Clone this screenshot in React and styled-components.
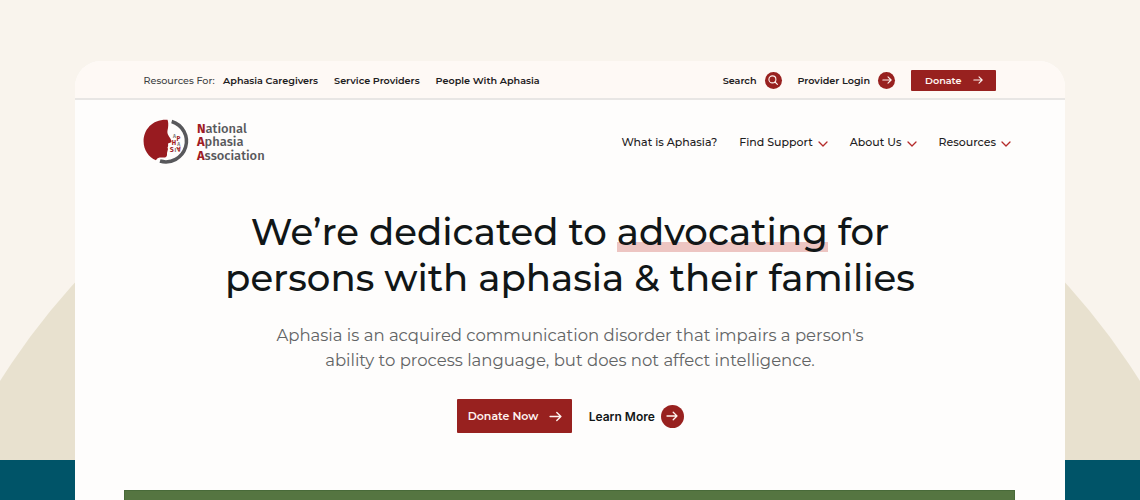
import styled, { createGlobalStyle } from "styled-components";

const red = "#98211f";
const ink = "#1d2021";

const GlobalStyle = createGlobalStyle`
  * { box-sizing: border-box; }
  body {
    margin: 0;
    font-family: Montserrat, Inter, "Liberation Sans", sans-serif;
    color: ${ink};
  }
`;

const Page = styled.div`
  position: relative;
  height: 500px;
  overflow: hidden;
  padding: 61px 75px 0;
  background: #f9f4ed;
`;

const Backdrop = styled.svg`
  position: absolute;
  left: 0;
  top: 0;
`;

const Card = styled.main`
  position: relative;
  height: 439px;
  overflow: hidden;
  display: flex;
  flex-direction: column;
  border-radius: 26px 26px 0 0;
  background: #fefdfc;
`;

const TopBar = styled.div`
  flex: none;
  height: 39px;
  display: flex;
  align-items: center;
  justify-content: space-between;
  padding: 1px 69px 0 68.5px;
  background: #fef9f5;
  border-bottom: 2px solid #e8e6e4;
`;

const TopLinks = styled.div`
  display: flex;
  align-items: center;
  gap: 16px;
`;

const TopLabel = styled.span`
  font-size: 9.65px;
  font-weight: 500;
  color: #3c3e3f;
  margin-right: -7.5px;
`;

const TopLink = styled.a`
  display: flex;
  align-items: center;
  gap: 8px;
  font-size: 9.65px;
  font-weight: 600;
  white-space: nowrap;
`;

const Round = styled.span`
  width: ${(p) => p.$size}px;
  height: ${(p) => p.$size}px;
  border-radius: 50%;
  background: ${red};
  display: flex;
  align-items: center;
  justify-content: center;
`;

const DonateButton = styled.a`
  width: 85px;
  height: 21px;
  display: flex;
  align-items: center;
  justify-content: space-between;
  padding: 0 13px 0 14px;
  border-radius: 1px;
  background: ${red};
  color: #fff4f0;
  font-size: 9.65px;
  font-weight: 600;
`;

const Header = styled.header`
  flex: none;
  height: 84px;
  display: flex;
  align-items: center;
  justify-content: space-between;
  padding: 0 54px 0 68px;
`;

const Brand = styled.a`
  display: flex;
  align-items: center;
  gap: 9px;
`;

const BrandName = styled.span`
  display: flex;
  flex-direction: column;
  font: 500 12.9px/13.5px "Fira Sans", "Open Sans", sans-serif;
  color: #58585b;

  b {
    font-weight: 700;
    color: #a01c24;
  }
`;

const LogoMark = styled.svg`
  overflow: visible;
  margin-bottom: 1px;
`;

const Nav = styled.nav`
  display: flex;
  align-items: center;
  gap: 22px;
`;

const NavItem = styled.a`
  display: flex;
  align-items: center;
  gap: 5px;
  font-size: 11px;
  font-weight: 500;
  white-space: nowrap;

  svg {
    margin-top: 3px;
  }
`;

const Hero = styled.section`
  display: flex;
  flex-direction: column;
  align-items: center;
  text-align: center;
  padding-top: 25px;
`;

const Title = styled.h1`
  margin: 0;
  font-size: 37.1px;
  font-weight: 500;
  line-height: 45.5px;
  color: #111617;
  white-space: nowrap;
`;

const Highlight = styled.span`
  background: linear-gradient(#edc5c2, #edc5c2) 0 33px / 100% 10px no-repeat;
`;

const Lead = styled.p`
  margin: 23px 0 0;
  font-size: 16.5px;
  line-height: 25px;
  color: #626465;
  white-space: nowrap;
`;

const Actions = styled.div`
  display: flex;
  align-items: center;
  gap: 17px;
  margin: 26.4px 0 0 0.5px;
`;

const PrimaryButton = styled.a`
  width: 115px;
  height: 34px;
  display: flex;
  align-items: center;
  justify-content: space-between;
  padding: 0 10px 0 11px;
  border-radius: 1px;
  background: ${red};
  color: #fff4f0;
  font-size: 11px;
  font-weight: 600;
`;

const TextButton = styled.a`
  display: flex;
  align-items: center;
  gap: 6px;
  font: 600 12px Inter, sans-serif;
  color: #111617;
`;

const GreenPanel = styled.div`
  flex: none;
  height: 10px;
  margin: auto 50px 0 49px;
  border: 1px solid #486a39;
  border-bottom: 0;
  background: #557541;
`;

function Arrow({ size = 12 }) {
  return (
    <svg width={size} height={size} viewBox="0 0 12 12" fill="none" stroke="#fff4f0" strokeWidth="1.3" strokeLinecap="round" strokeLinejoin="round">
      <path d="M1 6h10M7.200 2.200 11 6 7.200 9.800" />
    </svg>
  );
}

function Magnifier() {
  return (
    <svg width="10" height="10" viewBox="0 0 10 10" fill="none" stroke="#fff4f0" strokeWidth="1.1" strokeLinecap="round">
      <circle cx="4.4" cy="4.4" r="3.5" />
      <path d="m7 7 2.400 2.400" />
    </svg>
  );
}

function Chevron() {
  return (
    <svg width="10" height="6" viewBox="0 0 10 6" fill="none" stroke="#b52a2a" strokeWidth="1.3" strokeLinecap="round" strokeLinejoin="round">
      <path d="m1 1 4 4 4-4" />
    </svg>
  );
}

function Logo() {
  return (
    <LogoMark width="45" height="45" viewBox="0 0 45 45">
      <path d="M28.700 2.500A20.500 20.500 0 0 1 17 42" fill="none" stroke="#58585b" strokeWidth="3.500" />
      <path d="M24.500.8C10 0 .6 10 .6 22.500.6 31 5.500 38 13 41.300c1.500-3.300 4-2.800 8-2.800 3.500 0 3-2.500 3-4.500l1-4-.5-1.500c1-1.500.5-2.500.5-4l3.300-1.300c1-.5-.3-2.700-2.300-5.700-2.500-4-1.500-5.500-1-8.500.5-3.500.3-6-.5-8.200z" fill="#981b20" />
      <g fontFamily="Fira Sans, sans-serif" fontWeight="700" textAnchor="middle">
        <text x="31.500" y="19" fill="#77777a" fontSize="5">A</text>
        <text x="35.500" y="21.500" fill="#a01c24" fontSize="6.500">P</text>
        <text x="31" y="26" fill="#a01c24" fontSize="6.500">H</text>
        <text x="35.800" y="26.500" fill="#77777a" fontSize="5">A</text>
        <text x="28.800" y="33" fill="#a01c24" fontSize="7">S</text>
        <text x="32.300" y="32.500" fill="#77777a" fontSize="6">I</text>
        <text transform="rotate(170 36 30.300)" x="36" y="32.800" fill="#a01c24" fontSize="7">A</text>
      </g>
    </LogoMark>
  );
}

const resources = ["Aphasia Caregivers", "Service Providers", "People With Aphasia"];
const menu = [
  { label: "What is Aphasia?" },
  { label: "Find Support", more: true },
  { label: "About Us", more: true },
  { label: "Resources", more: true },
];

export default function App() {
  return (
    <Page>
      <GlobalStyle />
      <Backdrop width="1140" height="500">
        <circle cx="570" cy="737" r="672" fill="#e8e1cf" />
        <rect y="460" width="1140" height="40" fill="#005468" />
      </Backdrop>
      <Card>
        <TopBar>
          <TopLinks>
            <TopLabel>Resources For:</TopLabel>
            {resources.map((r) => <TopLink key={r}>{r}</TopLink>)}
          </TopLinks>
          <TopLinks>
            <TopLink>Search<Round $size={17}><Magnifier /></Round></TopLink>
            <TopLink>Provider Login<Round $size={17}><Arrow size={10} /></Round></TopLink>
            <DonateButton>Donate<Arrow size={10} /></DonateButton>
          </TopLinks>
        </TopBar>
        <Header>
          <Brand>
            <Logo />
            <BrandName>
              <span><b>N</b>ational</span>
              <span><b>A</b>phasia</span>
              <span><b>A</b>ssociation</span>
            </BrandName>
          </Brand>
          <Nav>
            {menu.map(({ label, more }) => (
              <NavItem key={label}>{label}{more && <Chevron />}</NavItem>
            ))}
          </Nav>
        </Header>
        <Hero>
          <Title>
            We’re dedicated to <Highlight>advocating</Highlight> for
            <br />
            persons with aphasia &amp; their families
          </Title>
          <Lead>
            Aphasia is an acquired communication disorder that impairs a person's
            <br />
            ability to process language, but does not affect intelligence.
          </Lead>
          <Actions>
            <PrimaryButton>Donate Now<Arrow size={13} /></PrimaryButton>
            <TextButton>Learn More<Round $size={23}><Arrow size={12} /></Round></TextButton>
          </Actions>
        </Hero>
        <GreenPanel />
      </Card>
    </Page>
  );
}
